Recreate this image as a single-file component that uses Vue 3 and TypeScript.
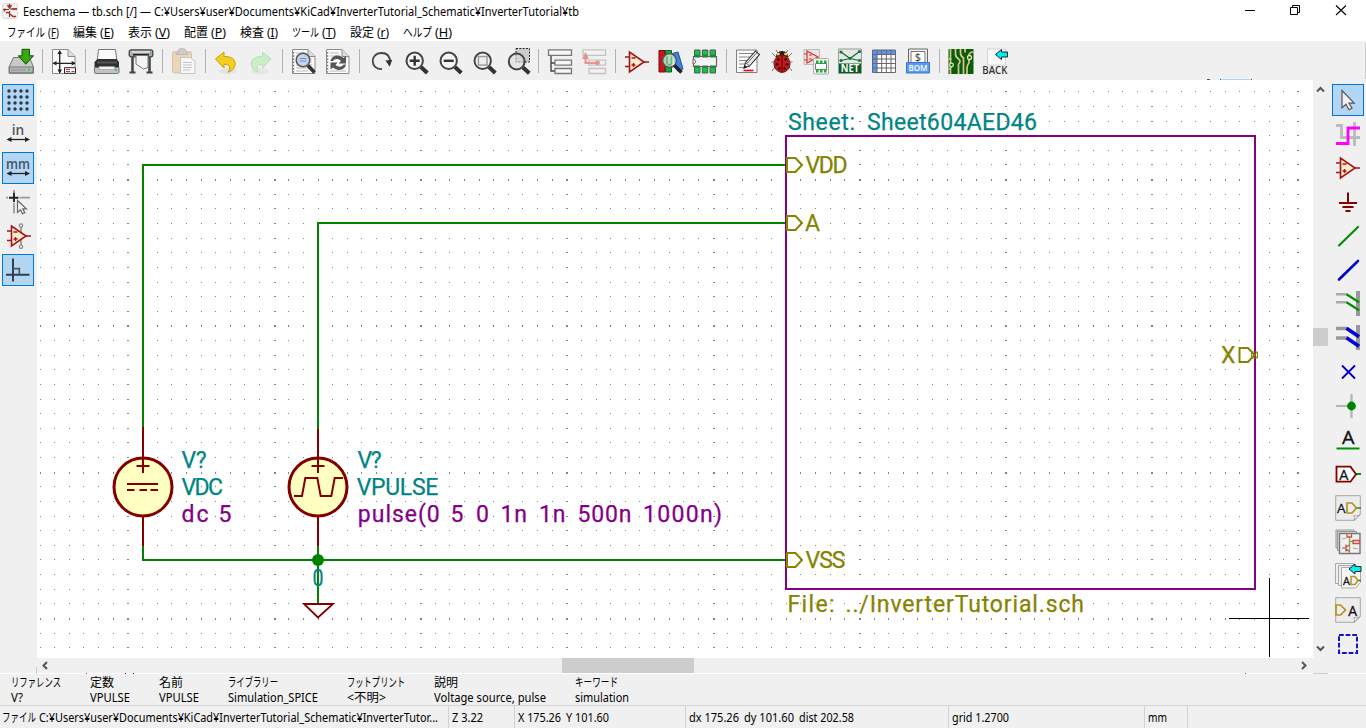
<script setup lang="ts">
interface Word { t: string; x: number; w: number }
interface Note { y: number; cls: string; words: Word[] }

/* ---------- menu, info and status texts ---------- */
const menus = [
  { text: 'ファイル', tw: 38, key: 'F', kw: 11, gap: 14 },
  { text: '編集', tw: 24, key: 'E', kw: 14, gap: 14 },
  { text: '表示', tw: 24, key: 'V', kw: 15, gap: 14 },
  { text: '配置', tw: 24, key: 'P', kw: 15, gap: 14 },
  { text: '検査', tw: 24, key: 'I', kw: 11, gap: 14 },
  { text: 'ツール', tw: 27, key: 'T', kw: 14, gap: 14 },
  { text: '設定', tw: 24, key: 'r', kw: 12, gap: 14 },
  { text: 'ヘルプ', tw: 29, key: 'H', kw: 17, gap: 0 },
]

const info = [
  { head: 'リファレンス', hw: 50, val: 'V?', vw: 12, cell: 79 },
  { head: '定数', hw: 24, val: 'VPULSE', vw: 40, cell: 69 },
  { head: '名前', hw: 24, val: 'VPULSE', vw: 40, cell: 69 },
  { head: 'ライブラリー', hw: 50, val: 'Simulation_SPICE', vw: 90, cell: 119 },
  { head: 'フットプリント', hw: 58, val: '<不明>', vw: 39, cell: 87 },
  { head: '説明', hw: 24, val: 'Voltage source, pulse', vw: 112, cell: 141 },
  { head: 'キーワード', hw: 43, val: 'simulation', vw: 54, cell: 120 },
]

const status = [
  { cell: 449, parts: [{ text: 'ファイル', w: 34 }, { text: 'C:¥Users¥user¥Documents¥KiCad¥InverterTutorial_Schematic¥InverterTutor...', w: 399 }] },
  { cell: 66, parts: [{ text: 'Z 3.22', w: 31 }] },
  { cell: 171, parts: [{ text: 'X 175.26', w: 43 }, { text: 'Y 101.60', w: 43 }] },
  { cell: 263, parts: [{ text: 'dx 175.26', w: 50 }, { text: 'dy 101.60', w: 50 }, { text: 'dist 202.58', w: 55 }] },
  { cell: 196, parts: [{ text: 'grid 1.2700', w: 57 }] },
  { cell: 43, parts: [{ text: 'mm', w: 19 }] },
]

/* ---------- canvas ---------- */
function gridPath(): string {
  let d = ''
  for (let i = -6; i <= 80; i++) {
    const x = Math.floor(127.88 + i * 14.63) - (i === 80 ? 1 : 0)
    const w = i % 10 === 0 ? 2 : 1
    for (let j = -6; j <= 32; j++) {
      const y = Math.floor(179.6 + j * 14.63)
      const h = j % 10 === 0 ? 2 : 1
      d += `M${x} ${y}h${w}v${h}h-${w}z`
    }
  }
  return d
}
const grid = gridPath()

const notes: Note[] = [
  { y: 129.7, cls: 'teal', words: [{ t: 'Sheet:', x: 788, w: 67 }, { t: 'Sheet604AED46', x: 867, w: 170 }] },
  { y: 172.7, cls: 'olive', words: [{ t: 'VDD', x: 805.5, w: 42 }] },
  { y: 231, cls: 'olive', words: [{ t: 'A', x: 805, w: 14 }] },
  { y: 567.7, cls: 'olive', words: [{ t: 'VSS', x: 805.5, w: 40 }] },
  { y: 362.7, cls: 'olive', words: [{ t: 'X', x: 1221, w: 14 }] },
  { y: 612, cls: 'olive', words: [{ t: 'File:', x: 787.5, w: 47 }, { t: '../InverterTutorial.sch', x: 845.5, w: 238.5 }] },
  { y: 468, cls: 'teal', words: [{ t: 'V?', x: 181.5, w: 25 }] },
  { y: 494.7, cls: 'teal', words: [{ t: 'VDC', x: 181.5, w: 41.5 }] },
  { y: 521.7, cls: 'purple', words: [{ t: 'dc', x: 181.5, w: 27 }, { t: '5', x: 218.5, w: 14.5 }] },
  { y: 468, cls: 'teal', words: [{ t: 'V?', x: 357.5, w: 24 }] },
  { y: 494.7, cls: 'teal', words: [{ t: 'VPULSE', x: 356.8, w: 81.5 }] },
  {
    y: 521.7, cls: 'purple', words: [
      { t: 'pulse(0', x: 357.8, w: 82 }, { t: '5', x: 450.5, w: 14 }, { t: '0', x: 476, w: 13.5 },
      { t: '1n', x: 500.5, w: 26.5 }, { t: '1n', x: 539, w: 26.5 }, { t: '500n', x: 577.5, w: 54 },
      { t: '1000n)', x: 643, w: 79 },
    ],
  },
]
const pinRows = [165, 223, 560]

/* ---------- icons, drawn on a 26 x 26 field ---------- */
const opamp = '<path d="M1 8h5M1 17.500h5M20 13h5" stroke="#a51616" stroke-width="1.500"/><path d="M5.500 3v20L20 13z" fill="#faeccc" stroke="#a51616" stroke-width="1.600"/><path d="M7.500 9h4M7.500 16h4M9.500 14v4" stroke="#a51616" stroke-width="1.400"/>'
const lens = '<circle cx="12.700" cy="11.800" r="8.200" fill="#f4f4f4" stroke="#444" stroke-width="2"/><path d="M19 18l6.300 6" stroke="#333" stroke-width="4"/>'
const sheetPage = '<path d="M1.500.500h15.500l7 7v17h-22.500z" fill="#fafafa" stroke="#8c8c8c"/><path d="M17 .500v7h7" fill="#ddd" stroke="#8c8c8c"/>'
const dotted = '<path d="M2.500 3v20.500" stroke="#777" stroke-width="1.500" stroke-dasharray="1.500 1.700"/>'
const curlPage = '<path d="M.7.700h24.600v19l-6 5.600h-18.600z" fill="#ececec" stroke="#a8a8a8"/><path d="M19 25.300c1-2 .5-4-.5-4.500 2 .5 5 .3 6.800-1.300z" fill="#fff" stroke="#a0a0a0"/>'
const chip = '<path d="M1.500 7.500h23v10h-23z" fill="#f4f4f4" stroke="#666" stroke-width="1.200"/><path d="M1 10c3.500 0 3.500 5 0 5z" fill="#f0f0f0" stroke="#666"/><path d="M2.500 1h5.500v7h-5.500zM10.300 1h5.500v7h-5.500zM18 1h5.500v7h-5.500zM2.500 17h5.500v7h-5.500zM10.300 17h5.500v7h-5.500zM18 17h5.500v7h-5.500z" fill="#12c83a" stroke="#556" stroke-width="1"/><path d="M3 5.500h4.500v2.500h-4.500zM10.800 5.500h4.500v2.500h-4.500zM18.500 5.500h4.500v2.500h-4.500zM3 17h4.500v2h-4.500zM10.800 17h4.500v2h-4.500zM18.500 17h4.500v2h-4.500z" fill="#1b8c30"/>'
const cyanArrow = 'stroke="#111" stroke-width=".900" fill="#00f0f4"'
const letter = 'font-family="Open Sans, sans-serif" fill="#111" stroke="#111" stroke-width=".300"'

const icons: Record<string, string> = {
  save: '<path d="M5.500 8.500h16l4 9.500v6.300h-24.500v-6.300z" fill="#c9c9c9" stroke="#777"/><path d="M1.500 18h23.500v5.800h-23.500z" fill="#b4b4b4" stroke="#777"/><path d="M3 21h15" stroke="#8e8e8e"/><circle cx="21" cy="20.800" r="1.200" fill="#2ce02c"/><path d="M14 .3h7.500v6.500h4l-7.700 8.400-7.500-8.400h3.700z" fill="#35a90c" stroke="#174d05"/>',
  page: `${sheetPage}<path d="M8.700 2v21.500M2.500 14.300h21.500" stroke="#222" stroke-width="1.300"/><path d="M8.700 1l2.300 4h-4.600zM8.700 24.500l2.300-4h-4.600zM1.500 14.300l4-2.300v4.600zM24.700 14.300l-4-2.300v4.600z" fill="#222"/><path d="M13.500 18.700h11v5.600h-11z" fill="#fff" stroke="#222"/><path d="M15 20.500h4M15 22.500h4M20.500 22.500h3" stroke="#b33"/>`,
  print: '<path d="M4.500.5h17l1.500 13h-20z" fill="#fbfbfb" stroke="#777"/><path d="M3.500 10h19l2.500 3v6h-24.500v-6z" fill="#303030"/><path d="M3 12.500h20v2h-20z" fill="#555"/><path d="M.5 18.500h24.500v4.500q0 1.500-1.500 1.500h-21.500q-1.500 0-1.500-1.500z" fill="#c2c2c2" stroke="#777"/><path d="M5 17.500h15.500v3h-15.500z" fill="#f1f1f1" stroke="#999" stroke-width=".6"/><circle cx="22" cy="21" r="1" fill="#2c2"/>',
  plot: '<path d="M4.500 7v16M21.500 7v16" stroke="#4a4a4a" stroke-width="2.600"/><path d="M1.500 23.500h6M18.500 23.500h6" stroke="#444" stroke-width="2"/><rect x="1.200" y=".800" width="23.600" height="7" rx="2" fill="#aeaeae" stroke="#444" stroke-width="1.300"/><path d="M4 3h18" stroke="#e4e4e4" stroke-width="1.500"/><path d="M5 5.700h16" stroke="#222" stroke-width="1.800"/><path d="M8 6.500h12v12l-4.500 1.500-7.500-5z" fill="#f4f4f4" stroke="#777"/><circle cx="22.500" cy="4.200" r="1" fill="#3c3"/>',
  paste: '<g opacity=".5"><rect x="1.500" y="2.800" width="19" height="21" rx="1.500" fill="#e8bd83" stroke="#c0925a"/><path d="M7 2q0-2.500 4-2.500t4 2.500l2 3.500h-12z" fill="#aaa" stroke="#888"/><path d="M9.500 8.500h10l4.500 4v12h-14.500z" fill="#fff" stroke="#999"/><path d="M12 13.500h9M12 16h9M12 18.500h9M12 21h7" stroke="#999"/></g>',
  undo: '<ellipse cx="14" cy="22" rx="9" ry="3" fill="#e3e3e3"/><path d="M1.500 10l8.500-7v4.500c9-.3 13 4.500 10.500 10.500-1 2.500-4 4.500-6.500 5.300 3-3.700 2.500-8.300-4-8v3.700z" fill="#f2cf20" stroke="#c79f0a"/>',
  redo: '<g opacity=".5"><ellipse cx="12" cy="22" rx="9" ry="3" fill="#ddd"/><path d="M23 10l-8.500-7v4.500c-9-.3-13 4.500-10.500 10.500 1 2.500 4 4.500 6.500 5.300-3-3.700-2.500-8.300 4-8v3.700z" fill="#a9eea0" stroke="#7ad17a"/></g>',
  find: `${sheetPage}${dotted}<path d="M5 4h9M5 7h13M5 10h16M5 13h16M5 16h16M5 19h14M5 22h12" stroke="#bbb"/><circle cx="12" cy="11" r="6.800" fill="#bcd4f4" fill-opacity=".85" stroke="#555" stroke-width="1.500"/><path d="M8.500 9.500h7M8.500 12h7" stroke="#6e8fc0"/><path d="M17 16.500l6.500 7" stroke="#333" stroke-width="3.600"/>`,
  replace: `${sheetPage}${dotted}<path d="M5 4h9M5 7h10M5 22h16" stroke="#bbb"/><path d="M5.500 12c1-6 9-7.500 13-3l2.500-2v7.500h-7.500l2.500-2.500c-3-3-7-2-8 0zM21 15.500c-1 6-9 7-13 3l-2.500 2v-7h7l-2 2.500c3 2.500 7 2 8-.5z" fill="#555"/>`,
  redraw: '<path d="M14 20c-12 1-12.500-16-.5-16 6 0 8.500 4 8.500 9" fill="none" stroke="#444" stroke-width="1.800"/><path d="M17.500 11.500l6.700-.7-2.500 7z" fill="#333"/>',
  zoomIn: `${lens}<path d="M7.700 11.800h10M12.700 6.800v10" stroke="#333" stroke-width="2.400"/>`,
  zoomOut: `${lens}<path d="M7.700 11.800h10" stroke="#333" stroke-width="2.400"/>`,
  zoomFit: `${lens}<rect x="8.400" y="7.500" width="8.600" height="8.600" fill="#eee" stroke="#999" stroke-width="1.500"/>`,
  zoomSel: '<rect x="12" y="-.500" width="13.500" height="13.500" fill="#ccc" stroke="#222" stroke-dasharray="2 1.300"/><circle cx="12.700" cy="12.500" r="7.900" fill="#ddd" fill-opacity=".6" stroke="#444" stroke-width="2"/><path d="M19 18.500l6.300 5.700" stroke="#333" stroke-width="4"/>',
  tree: '<path d="M4 6.500v15.500h5M4 14h5" fill="none" stroke="#444" stroke-width="1.400"/><path d="M1.500 .8h23v5.500h-23zM8 11.200h16.500v5h-16.500zM8 19.500h16.500v5h-16.500z" fill="#f6f6f6" stroke="#777" stroke-width="1.300"/>',
  leave: '<g opacity=".42"><path d="M2 .800h22.500v5.500h-22.500zM8 11.200h16.500v5h-16.500zM8 19.500h16.500v5h-16.500z" fill="#f6f6f6" stroke="#888" stroke-width="1.300"/></g><path d="M4.500 8v6h12" fill="none" stroke="#ec8f8f" stroke-width="2"/><path d="M4.500 3l3.500 7h-7z" fill="#ec8f8f"/><circle cx="16.500" cy="14" r="2.400" fill="#ec8f8f"/>',
  opamp,
  library: '<path d="M1 1.500h6v21.500h-6z" fill="#c81616" stroke="#7b0909"/><path d="M7.500 1.500h6v21.500h-6z" fill="#18a53a" stroke="#0c5c1e"/><path d="M14.500 4.500l5.500-1.500 5 17-5.500 2z" fill="#3c86e6" stroke="#1d4e9c"/><circle cx="11.500" cy="11.500" r="6.900" fill="#d8eedd" fill-opacity=".8" stroke="#555" stroke-width="1.500"/><path d="M9 7.500v7q2.500 3 4.500 0v-7" fill="none" stroke="#6cb583" stroke-width="1.800"/><path d="M16.500 16.500l7 7" stroke="#222" stroke-width="3.500"/>',
  footprint: chip,
  annotate: '<path d="M1.500 1h20.500v22.500h-20.500z" fill="#fafafa" stroke="#808080"/><path d="M4 4.500h14M4 8h11M4 11.500h9M4 15h6M4 18.500h5" stroke="#888" stroke-width="1.200"/><path d="M8.500 21.500h10" stroke="#e00" stroke-width="1.600"/><path d="M9 19l1.500-5.500 10-11.500 4 3.500-10 11.500z" fill="#eee" stroke="#333" stroke-width="1.100"/><path d="M12 14.500l9.500-10.500M10.500 13.500l4 3.500" stroke="#666"/><path d="M9 19l.8-2.700 2 1.700z" fill="#111"/>',
  bug: '<path d="M7 8l-4-4M19 8l4-4M5 13H2.500M21 13h2.500M6 18l-3 4M20 18l3 4M9 4L7 1M17 4l2-3" stroke="#777" stroke-width="1"/><path d="M7 8q0-6 6-6t6 6z" fill="#222"/><circle cx="9.300" cy="5" r="1.600" fill="#f4d34c"/><circle cx="16.700" cy="5" r="1.600" fill="#f4d34c"/><ellipse cx="13" cy="14.700" rx="8" ry="8.700" fill="#c41c1c" stroke="#7a1010"/><path d="M13 6.500v17" stroke="#500"/><g fill="#2a0808"><circle cx="9.300" cy="10.500" r="1.400"/><circle cx="16.700" cy="10.500" r="1.400"/><circle cx="8" cy="15.300" r="1.400"/><circle cx="18" cy="15.300" r="1.400"/><circle cx="10.300" cy="19.500" r="1.300"/><circle cx="15.700" cy="19.500" r="1.300"/></g>',
  assign: '<path d="M1 .500h15.500v15h-15.500z" fill="#e9e6e3" stroke="#bbb"/><path d="M4 2v12l11-6zM1 5h3M1 11h3" fill="#f3dcd0" stroke="#c43a3a" stroke-width="1.200"/><path d="M6 6h3M6 10h3" stroke="#c43a3a"/><rect x="10.500" y="9.500" width="15" height="15.500" rx="1" fill="#f4f4f4" stroke="#aaa"/><path d="M12.500 14.500h11v6h-11z" fill="#fff" stroke="#777"/><path d="M13 11.500h2.500v3.500h-2.500zM17 11.500h2.500v3.500h-2.500zM21 11.500h2.500v3.500h-2.500zM13 20h2.500v3.500h-2.500zM17 20h2.500v3.500h-2.500zM21 20h2.500v3.500h-2.500z" fill="#1dab3d"/>',
  net: '<path d="M1.500 0h23v24.500h-23z" fill="#e6e6e6" stroke="#999"/><path d="M4 3l9 6.500 9.500-7M4 11.500l9-2 9.500 2" fill="none" stroke="#0e6b2c" stroke-width="1.200"/><g fill="#0e7a2f"><circle cx="4" cy="3" r="1.600"/><circle cx="22.500" cy="2.500" r="1.600"/><circle cx="4" cy="11.500" r="1.600"/><circle cx="13" cy="9.300" r="1.600"/><circle cx="22.500" cy="11.500" r="1.600"/></g><path d="M2 14.500h22v9.500h-22z" fill="#0a5c22"/><text x="3.700" y="22.900" textLength="18.500" lengthAdjust="spacingAndGlyphs" font-size="10.500" font-weight="bold" font-family="Open Sans, sans-serif" fill="#fff">NET</text>',
  table: '<path d="M1.500 1h23v22.500h-23z" fill="#fff"/><path d="M1.500 1h23v4.500h-18.500v18h-4.500z" fill="#5b97ee"/><path d="M1.500 1h23v22.500h-23zM6 1v22.500M10.700 1v22.500M15.300 1v22.500M20 1v22.500M1.500 5.500h23M1.500 10h23M1.500 14.500h23M1.500 19h23" fill="none" stroke="#66666c"/>',
  bom: '<path d="M3.500 0h19v14h-19z" fill="#f2f2f2" stroke="#666"/><path d="M6 2.500h14v11h-14z" fill="#fff" stroke="#777"/><text x="9.800" y="11.500" font-size="11" font-family="Open Sans, sans-serif" fill="#333">$</text><path d="M1.500 13.500h23v10.500h-23z" fill="#5a9bf6" stroke="#3c76c8"/><text x="3.500" y="21.500" textLength="19" lengthAdjust="spacingAndGlyphs" font-size="9.500" font-weight="600" font-family="Open Sans, sans-serif" fill="#fff">BOM</text>',
  pcb: '<path d="M.5 0h25v25h-25z" fill="#085c0c"/><path d="M2.500 0v25M7.500 0v5q0 3 3 5t0 5v10M12.500 0v4q0 3 3 5v16M17 0v3.500M21 11v3q-2 2-2 5v6M.5 20q3-1 3-4" fill="none" stroke="#d5c98e" stroke-width="1.700"/><path d="M25.500 3q-5 0-5 5M.500 10h3" fill="none" stroke="#d5c98e" stroke-width="1.500"/><circle cx="21.500" cy="8.500" r="2" fill="#085c0c" stroke="#eee3ae" stroke-width="1.300"/><circle cx="3.500" cy="16" r="1.800" fill="#085c0c" stroke="#eee3ae" stroke-width="1.300"/>',
  back: `<path d="M5.500 0h18v16h-18z" fill="#f8f8f8" stroke="#d4d4d4"/><path d="M13.500 5.500l6-5v2.500h6v5h-6v2.500z" ${cyanArrow}/><text x=".3" y="24.500" textLength="25" lengthAdjust="spacingAndGlyphs" font-size="11.500" font-weight="600" font-family="Open Sans, sans-serif" fill="#333">BACK</text>`,
  dots: [4, 10, 16, 22].map(y => [4, 10, 16, 22].map(x => `<circle cx="${x}" cy="${y}" r="1.700" fill="#2b3947"/>`).join('')).join(''),
  inch: '<text x="6.800" y="14" textLength="12.500" lengthAdjust="spacingAndGlyphs" font-size="15" font-weight="600" font-family="Open Sans, sans-serif" fill="#555">in</text><path d="M3 18.500h19" stroke="#222" stroke-width="1.300"/><path d="M1.500 18.500l5-2.500v5zM25 18.500l-5-2.500v5z" fill="#222"/>',
  mm: '<text x="1" y="14" textLength="24" lengthAdjust="spacingAndGlyphs" font-size="15" font-weight="600" font-family="Open Sans, sans-serif" fill="#44525f">mm</text><path d="M3 18.500h19" stroke="#222" stroke-width="1.300"/><path d="M1.500 18.500l5-2.500v5zM25 18.500l-5-2.500v5z" fill="#222"/>',
  cursor: '<path d="M1 8.700h2M14.500 8.700h10.500M9 1v2M9 14v10.500" stroke="#999" stroke-width="1.700"/><path d="M4 8.700h9.500M9 3.500v9.500" stroke="#222" stroke-width="1.900"/><path d="M12.500 11.500v12l3-2.700 2 4 2.300-1-2-4h3.600z" fill="#f4f4f4" stroke="#666" stroke-width="1.200"/>',
  hidden: `<path d="M16 4v20" stroke="#999" stroke-width="1.800"/><circle cx="16" cy="2.500" r="1.700" fill="#eee" stroke="#888" stroke-width="1.200"/><circle cx="16" cy="23.700" r="1.700" fill="#eee" stroke="#888" stroke-width="1.200"/><g transform="translate(1 0)">${opamp}</g>`,
  ortho: '<path d="M8 1.500v23M1 17.800h23.500" stroke="#333f4a" stroke-width="2"/><path d="M8 11.700h6.300v6" fill="none" stroke="#555" stroke-width="1.700"/>',
  arrow: '<path d="M7 3.500v17.500l4-3.700 3 5.500 3-1.500-3-5.200h5.200z" fill="#f1f1f1" stroke="#555" stroke-width="1.200"/>',
  highlight: '<path d="M1 4.500h5.500v12h16M19.500 1v24M14 16.500h11" fill="none" stroke="#bbb" stroke-width="2.800"/><path d="M1 22.500h12v-15.500h12" fill="none" stroke="#f0f" stroke-width="2.800"/>',
  power: '<path d="M13 3.500v10.500M4 14h18M7.500 18h11M10.500 22h5" stroke="#840000" stroke-width="2"/>',
  wire: '<path d="M4 22.500l19-18.500" stroke="#009000" stroke-width="2.200" stroke-linecap="round"/>',
  bus: '<path d="M4 22.500l19-18.500" stroke="#00c" stroke-width="2.600" stroke-linecap="round"/>',
  wireEntry: '<path d="M23 0v25" stroke="#999" stroke-width="4"/><path d="M1 3.300h11M1 11.300h11" stroke="#aaa" stroke-width="2.600"/><path d="M11.500 3.300l12.500 8M11.500 11.300l12.500 8" stroke="#009000" stroke-width="2.200"/>',
  busEntry: '<path d="M23 0v25" stroke="#999" stroke-width="4"/><path d="M1 3.500h11M1 13h11" stroke="#999" stroke-width="3.600"/><path d="M11.500 3.300l12.500 8.500M11.500 12.800l12.500 8.500" stroke="#0000d8" stroke-width="3.600"/>',
  noConn: '<path d="M7 6.500l13 13M20 6.500l-13 13" stroke="#0000c8" stroke-width="1.800"/>',
  junction: '<path d="M1 13h16M16.500 1v24" stroke="#b4b4b4" stroke-width="2.200"/><circle cx="16.500" cy="13" r="4.400" fill="#008400"/>',
  label: `<text x="7" y="17" textLength="12.500" lengthAdjust="spacingAndGlyphs" font-size="19" ${letter}>A</text><path d="M1.500 21.500h23" stroke="#009000" stroke-width="2"/>`,
  globalLabel: `<path d="M20 13h6" stroke="#009000" stroke-width="2"/><path d="M1.500 5.700h14l5.500 7.500-5.500 7.500h-14z" fill="#fff" stroke="#840000" stroke-width="1.800"/><text x="4.300" y="18.500" font-size="14.500" ${letter}>A</text>`,
  hierLabel: `${curlPage}<path d="M20 13h6" stroke="#090" stroke-width="1.500"/><text x="2" y="18" font-size="13.500" ${letter}>A</text><path d="M12 8h5l4.500 5-4.500 5h-5z" fill="none" stroke="#b8901c" stroke-width="1.700"/>`,
  sheet: '<path d="M1 1h18v18h-18z" fill="#ddd" stroke="#999"/><path d="M2.500 2.500h19v19h-19z" fill="#ddd" stroke="#999"/><path d="M4.500 4.500h20.500v20h-20.500z" fill="#f0f0f0" stroke="#777" stroke-width="1.400"/><path d="M14.500 9v11M7 19h4M15 12.500h3M14.500 20v4" stroke="#73b54c" stroke-width="1.300"/><path d="M12 5v3h4.500V5M18 11.500h6.500v3H18zM11 15.500v7M11 18l3.500-2M11 20l3.500 2.500" fill="none" stroke="#d34848" stroke-width="1.300"/><path d="M7 10l4-1M18 19l5 1" stroke="#aaa"/>',
  importLabel: `<path d="M.5.500h18v20h-18z" fill="#eee" stroke="#aaa"/><path d="M3.500 2.500h18v20h-18z" fill="#eee" stroke="#aaa"/><path d="M6.500 4.500h19v15l-5 5.500h-14z" fill="#f6f6f6" stroke="#aaa"/><path d="M22 17.500h4" stroke="#090" stroke-width="1.500"/><text x="8" y="21.500" font-size="11" ${letter}>A</text><path d="M16 13.500h4l3 4-3 4h-4z" fill="none" stroke="#b8901c" stroke-width="1.500"/><path d="M14 6l6-5v2.500h6v5h-6v2.500z" ${cyanArrow}/>`,
  sheetPin: `${curlPage}<text x="13.300" y="18.500" font-size="14" ${letter}>A</text><path d="M1 8h4.500l5 5-5 5h-4.500z" fill="none" stroke="#b8901c" stroke-width="1.700"/>`,
  dashed: '<rect x="4" y="4" width="18" height="18" fill="none" stroke="#1414c8" stroke-width="2" stroke-dasharray="4.800 1.800"/>',
}

const toolGroups: string[][] = [
  ['save'], ['page'], ['print', 'plot'], ['paste'], ['undo', 'redo'], ['find', 'replace'],
  ['redraw', 'zoomIn', 'zoomOut', 'zoomFit', 'zoomSel'], ['tree', 'leave'],
  ['opamp', 'library', 'footprint'], ['annotate', 'bug', 'assign', 'net', 'table', 'bom'], ['pcb', 'back'],
]
const leftTools = [
  { icon: 'dots', on: true }, { icon: 'inch', on: false }, { icon: 'mm', on: true },
  { icon: 'cursor', on: false }, { icon: 'hidden', on: false }, { icon: 'ortho', on: true },
]
const rightTools = ['arrow', 'highlight', 'opamp', 'power', 'wire', 'bus', 'wireEntry', 'busEntry', 'noConn',
  'junction', 'label', 'globalLabel', 'hierLabel', 'sheet', 'importLabel', 'sheetPin', 'dashed']
</script>

<template>
  <div class="window">
    <header class="titlebar">
      <svg class="logo" width="16" height="16" viewBox="0 0 16 16">
        <rect x=".5" y=".5" width="15" height="15" rx="2" fill="#f2f2ee" stroke="#dcdcd8" />
        <path d="M7.500 1v4M7.500 8v6M1 6.500h6M8 6h7" stroke="#444" stroke-width="1.200" />
        <path d="M5.500 2l2 3 2-3M10 6h5M4 9.500h4M8 11l3 2.500h3M2.500 5.500v3" fill="none" stroke="#c02626" stroke-width="1.500" />
      </svg>
      <svg class="fit" width="557" height="20"><text y="14" textLength="556" lengthAdjust="spacingAndGlyphs">Eeschema — tb.sch [/] — C:¥Users¥user¥Documents¥KiCad¥InverterTutorial_Schematic¥InverterTutorial¥tb</text></svg>
      <svg class="controls" width="104" height="16" viewBox="1244 2 104 16" fill="none" stroke="#000">
        <path d="M1245 10.500h10" />
        <path d="M1290.500 7.500h7v7h-7zM1292.500 7v-1.500h7v7h-2" />
        <path d="M1336 5.500l10 9.500M1346 5.500l-10 9.500" stroke-width="1.100" />
      </svg>
    </header>

    <nav class="menubar">
      <span v-for="m in menus" :key="m.text" class="menu" :style="{ marginRight: m.gap + 'px' }">
        <svg class="fit" :width="m.tw" height="18"><text y="14" :textLength="m.tw" lengthAdjust="spacingAndGlyphs">{{ m.text }}</text></svg>
        <svg class="fit" :width="m.kw" height="18">
          <text y="14" :textLength="m.kw" lengthAdjust="spacingAndGlyphs">({{ m.key }})</text>
          <path :d="`M3.500 15.500H${m.kw - 3.5}`" stroke="#000" />
        </svg>
      </span>
    </nav>

    <div class="toolbar">
      <template v-for="(g, gi) in toolGroups" :key="gi">
        <span v-if="gi > 0" class="sep"></span>
        <span v-for="name in g" :key="name" class="tool">
          <svg width="26" height="26" viewBox="0 0 26 26" v-html="icons[name]"></svg>
        </span>
      </template>
    </div>

    <div class="work">
      <aside class="side left">
        <button v-for="t in leftTools" :key="t.icon" class="side-btn" :class="{ on: t.on }">
          <svg width="26" height="26" viewBox="0 0 26 26" v-html="icons[t.icon]"></svg>
        </button>
      </aside>

      <main class="editor">
        <div class="view">
          <svg class="canvas" width="1276" height="578" viewBox="37 80 1276 578">
            <path :d="grid" fill="#848484" shape-rendering="crispEdges" />

            <g fill="none" stroke="#840000" stroke-width="2">
              <g fill="#ffffc2" stroke-width="3">
                <circle cx="143" cy="487" r="29" />
                <circle cx="318" cy="487" r="29" />
              </g>
              <path d="M143 427V473M136.500 466H149.500M143 517V546M318 429V473M311.500 466H324.500M318 517V546" />
              <path d="M127 484H158M127 490H134.500M139.500 490H147M150.500 490H158" />
              <path d="M294 496H302L305.300 478H317.300L320.700 496H331.300L334.700 478H343" />
            </g>

            <g fill="none" stroke="#008400" stroke-width="2">
              <path d="M786 165H143V427M786 223H318V429M143 546V560H786M318 546V604" />
              <circle cx="318" cy="560" r="6" fill="#008400" stroke="none" />
            </g>
            <path d="M304 604H333L318 617.500Z" fill="none" stroke="#840000" stroke-width="1.800" />

            <rect x="786" y="136" width="469" height="453" fill="none" stroke="#840084" stroke-width="2" />
            <g fill="none" stroke="#848400" stroke-width="2">
              <path v-for="y in pinRows" :key="y" :d="`M787 ${y - 7}H795.500L802 ${y}L795.500 ${y + 7}H787Z`" />
              <path d="M1239.500 348H1248L1254.500 355L1248 362H1239.500Z" />
              <path d="M1251.500 352H1257.500V358H1251.500ZM1251.500 352L1257.500 358M1257.500 352L1251.500 358" stroke-width="1" />
            </g>

            <g class="notes">
              <text v-for="(n, i) in notes" :key="i" :class="n.cls">
                <tspan v-for="w in n.words" :key="w.x" :x="w.x" :y="n.y" :textLength="w.w" lengthAdjust="spacing">{{ w.t }}</tspan>
              </text>
              <text class="teal" x="312.500" y="585.700" textLength="11" lengthAdjust="spacingAndGlyphs">0</text>
            </g>

            <path d="M1229 618.500H1309M1269.500 578V657" stroke="#000" />
          </svg>
          <div class="vbar">
            <svg width="15" height="578" viewBox="0 0 15 578">
              <path d="M4 11.500l3.500-3.500 3.500 3.500M4 566.500l3.500 3.500 3.500-3.500" fill="none" stroke="#555" stroke-width="2" />
              <rect y="248" width="15" height="18" fill="#cdcdcd" />
            </svg>
          </div>
        </div>
        <div class="hbar">
          <svg width="1276" height="15" viewBox="0 0 1276 15">
            <path d="M10 4l-3.500 3.500 3.500 3.500M1265 4l3.500 3.500-3.500 3.500" fill="none" stroke="#555" stroke-width="2" />
            <rect x="525" width="132" height="15" fill="#cdcdcd" />
          </svg>
        </div>
      </main>

      <aside class="side right">
        <button v-for="(name, i) in rightTools" :key="name" class="side-btn" :class="{ on: i === 0 }">
          <svg width="26" height="26" viewBox="0 0 26 26" v-html="icons[name]"></svg>
        </button>
      </aside>
    </div>

    <section class="info">
      <div v-for="(c, i) in info" :key="i" class="info-col" :style="{ width: c.cell + 'px' }">
        <svg class="fit" :width="c.hw" height="15"><text y="12" :textLength="c.hw" lengthAdjust="spacingAndGlyphs">{{ c.head }}</text></svg>
        <svg class="fit" :width="c.vw" height="16"><text y="12" :textLength="c.vw" lengthAdjust="spacingAndGlyphs">{{ c.val }}</text></svg>
      </div>
    </section>

    <footer class="status">
      <div v-for="(s, i) in status" :key="i" class="cell" :style="{ width: s.cell + 'px' }">
        <svg v-for="p in s.parts" :key="p.text" class="fit" :width="p.w" height="18"><text y="13" :textLength="p.w" lengthAdjust="spacingAndGlyphs">{{ p.text }}</text></svg>
      </div>
    </footer>

    <!-- repaint remnants along the pane borders -->
    <svg class="remnants" width="1366" height="728" viewBox="0 0 1366 728">
      <path d="M1220 79.500h32" stroke="#b3d6f4" />
      <path d="M1220 79.500h1M1251 79.500h1" stroke="#0078d7" />
      <path d="M1207 79.500h3M86 673.500h1M1245 673.500h1" stroke="#555" />
      <path d="M125 673.500h1M133 673.500h1" stroke="#840000" />
      <path d="M36.500 667v7M1365.500 43v36M1313 673.500h15" stroke="#ccc" />
    </svg>
  </div>
</template>

<style>
html, body { margin: 0; overflow: hidden; }
</style>

<style scoped>
.window {
  position: relative;
  width: 1366px;
  height: 728px;
  display: flex;
  flex-direction: column;
  background: #f0f0f0;
  font-family: "Noto Sans", "Noto Sans CJK JP", sans-serif;
  font-size: 12px;
  color: #000;
  overflow: hidden;
}
svg { display: block; flex: none; }
.fit, .tool svg, .side-btn svg { overflow: visible; }
.fit text { font-size: 12px; fill: #000; white-space: pre; }
.titlebar { height: 23px; background: #fff; display: flex; align-items: flex-start; box-sizing: border-box; padding: 2px 18px 0 2px; }
.logo { margin: 1px 5px 0 0; }
.controls { margin-left: auto; }
.menubar { height: 18px; background: #fff; display: flex; padding-left: 7px; }
.menu { display: flex; gap: 3px; flex: none; }
.toolbar { height: 39px; display: flex; align-items: flex-start; padding: 0 0 0 4px; }
.tool { width: 34px; height: 39px; display: flex; justify-content: center; padding-top: 8px; box-sizing: border-box; flex: none; }
.sep { width: 1px; height: 24px; margin: 8px 4px 0; background: #b2b2b2; flex: none; }
.work { height: 593px; display: flex; }
.side { display: flex; flex-direction: column; gap: 2px; padding-top: 4px; box-sizing: border-box; height: 593px; }
.left { width: 37px; padding-left: 2px; }
.right { width: 38px; padding-left: 4px; }
.side-btn {
  width: 32px; height: 32px; padding: 0; border: 1px solid transparent; background: none;
  display: flex; align-items: center; justify-content: center; flex: none;
}
.side-btn.on { background: #b3d6f4; border-color: #0078d7; }
.editor { width: 1291px; }
.view { height: 578px; display: flex; }
.canvas { background: #fff; }
.vbar { width: 15px; background: #f0f0f0; }
.hbar { height: 15px; background: #f0f0f0; }
.notes { font-family: Roboto, "Liberation Sans", sans-serif; font-size: 23px; }
.notes text { stroke-width: .25px; }
.teal { fill: #008484; stroke: #008484; }
.olive { fill: #848400; stroke: #848400; }
.purple { fill: #840084; stroke: #840084; }
.info { height: 30px; border-top: 1px solid #fff; border-bottom: 1px solid #d2d2d2; display: flex; padding: 1px 0 0 11px; }
.info-col { flex: none; }
.status { height: 22px; display: flex; }
.cell { box-sizing: border-box; flex: none; display: flex; gap: 5px; padding: 3px 0 0 3px; border-right: 1px solid #d2d2d2; }
.cell:first-child { padding-left: 2px; gap: 3px; }
.remnants { position: absolute; left: 0; top: 0; pointer-events: none; }
</style>
